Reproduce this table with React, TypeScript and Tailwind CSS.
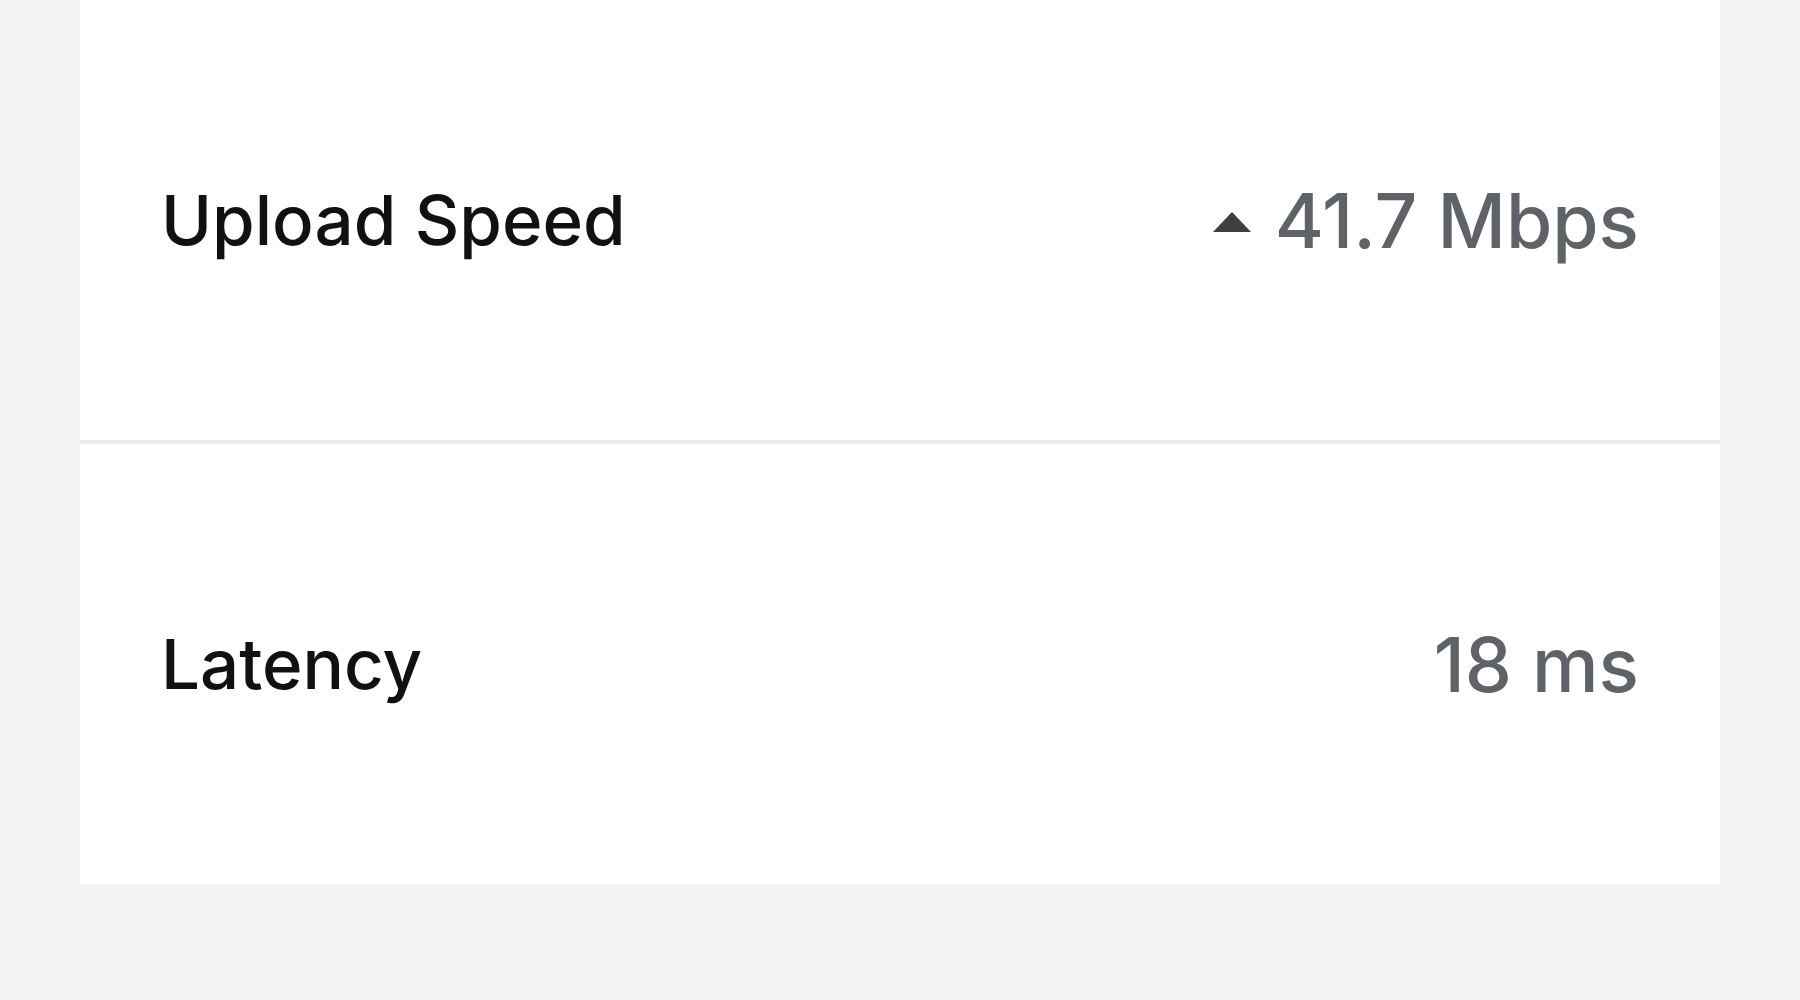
import React from 'react';

type Stat = {
  label: string;
  value: string;
  up?: boolean;
};

const stats: Stat[] = [
  { label: 'Upload Speed', value: '41.7 Mbps', up: true },
  { label: 'Latency', value: '18 ms' },
];

const StatRow: React.FC<{ stat: Stat; last: boolean }> = ({ stat, last }) => {
  return (
    <div
      className={`flex items-center justify-between px-[81px] ${
        last ? 'h-[440px]' : 'h-[444px] border-b-4 border-[#ececec]'
      }`}
    >
      <span className="text-[69px] font-medium leading-none text-[#111111]">
        {stat.label}
      </span>
      <div className="flex items-center gap-[24px]">
        {stat.up && (
          <svg width="38" height="20" viewBox="0 0 38 20" className="mt-[4px]">
            <polygon points="19,0 38,20 0,20" fill="#3c4043" />
          </svg>
        )}
        <span className="text-[75px] font-medium leading-none text-[#5f6368]">
          {stat.value}
        </span>
      </div>
    </div>
  );
};

const App: React.FC = () => {
  return (
    <div
      className="min-h-screen w-full bg-[#f3f4f6] px-[80px]"
      style={{ fontFamily: 'Inter, "Noto Sans", sans-serif' }}
    >
      <div className="flex flex-col bg-white">
        {stats.map((s, i) => (
          <StatRow key={s.label} stat={s} last={i === stats.length - 1} />
        ))}
      </div>
    </div>
  );
};

export default App;
